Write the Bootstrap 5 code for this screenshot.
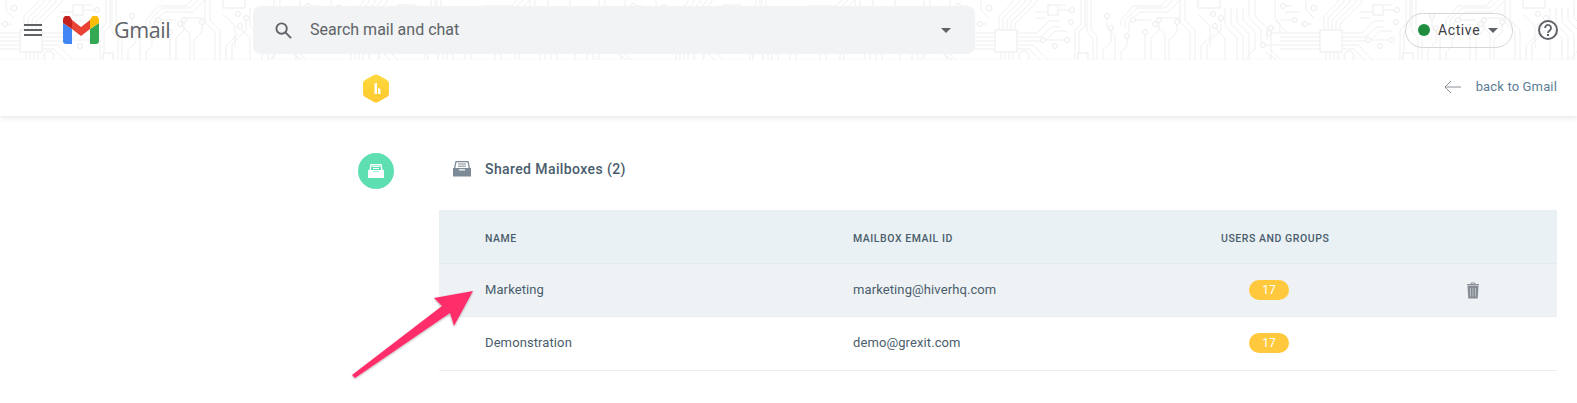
<!doctype html>
<html lang="en">
<head>
<meta charset="utf-8">
<title>Shared Mailboxes</title>
<link href="https://cdn.jsdelivr.net/npm/bootstrap@5.3.0/dist/css/bootstrap.min.css" rel="stylesheet">
<style>
html,body{height:403px;overflow:hidden;background:#fff;font-family:Roboto,"Liberation Sans",sans-serif;color:#4a5d6c}
.gm-head{height:60px;z-index:1}
.gm-bg{inset:0;width:100%;height:100%;z-index:-1}
.gm-menu{margin-left:24px;width:18px;height:12px;flex:none}
.gm-logo{margin-left:21px;width:36px;height:28px;flex:none}
.gm-word{font-family:"Open Sans",Roboto,sans-serif;font-size:21.5px;letter-spacing:-.4px;color:#5f6368;margin-left:15px;width:83px;margin-right:56px;line-height:28px;flex:none}
.gm-search{width:722px;height:48px;background:#f1f3f4;border-radius:8px;color:#5f6368;font-size:16px;padding:0 24px 0 22px;flex:none}
.gm-search-text{margin-left:18px}
.gm-tools{margin-left:auto;padding-right:19px}
.gm-active{width:108px;height:35px;border:1px solid #d5d7d9;border-radius:18px;font-size:14px;font-weight:400;color:#3c4043;letter-spacing:.6px;padding-left:12px}
.gm-dot{width:12px;height:12px;border-radius:50%;background:#1e8e3e;margin-right:8px}
.gm-caret{width:0;height:0;border:5px solid transparent;border-top-color:#5f6368;border-bottom:0;margin-left:8px}
.gm-help{margin-left:25px;width:20px;height:20px}
.hv-bar{height:56px;box-shadow:0 2px 5px rgba(0,0,0,.09);padding-left:363px;padding-right:20px}
.hv-back{font-size:13px;color:#5a7d96;letter-spacing:.15px;margin-top:-2px}
.hv-back svg{margin-right:14px}
.hv-main{padding-left:358px;padding-right:20px;padding-top:37px}
.hv-rail{width:81px;flex:none}
.hv-round{width:36px;height:36px;background:#5ddfb2}
.hv-title{height:36px;padding-left:14px;font-size:14px;font-weight:500;letter-spacing:.4px;margin-top:-2px;margin-bottom:23px}
.hv-title svg{margin-right:14px}
.hv-tbl{table-layout:fixed;width:1118px;font-size:13px;letter-spacing:.1px;color:#4a5d6c;--bs-table-bg:transparent;margin:0}
.hv-tbl th,.hv-tbl td{padding:0;vertical-align:middle;border-bottom:1px solid #e8eef2;color:#4a5d6c}
.hv-tbl th{height:53px;background:#e9f1f4;font-size:10.5px;font-weight:500;letter-spacing:.55px;text-transform:uppercase;padding-top:5px;border-bottom-color:#e2eaee}
.hv-tbl td{height:53.5px}
.hv-tbl tr.hv-hot td{background:#eef2f5}
.hv-tbl td.hv-low{padding-bottom:2px}
.hv-c1{width:414px;padding-left:46px!important}
.hv-c2{width:368px}
.hv-c3{width:160px}
.hv-pill{width:40px;height:20px;border-radius:10px;background:#ffc83d;color:#fff;font-size:12px;margin-left:28px;line-height:20px}
.hv-trash{margin-left:85px}
.hv-arrow{left:345px;top:285px;width:135px;height:100px;z-index:2}
</style>
</head>
<body class="position-relative">
<header class="gm-head position-relative d-flex align-items-center overflow-hidden">
<svg class="gm-bg position-absolute" aria-hidden="true">
<defs><pattern id="circ" width="325" height="60" patternUnits="userSpaceOnUse">
<g fill="none" stroke="#efefef" stroke-width="1">
<path d="M0 33H20M0 37H20M0 41H20M0 45H20M0 49H20M24 30V16L38 2V0M28 30V18L44 2V0M32 30V20L50 2V0M36 30V22L56 2V0M40 30V24L62 2V0M42 33H62L74 21H84M42 37H66L76 27H84M42 41H70L80 31H92M42 45H58L73 60M42 49H54L65 60M26 52V60M30 52V60M34 52V60M38 52V60M6 0V10L14 18M0 24H12M90 40H70M84 10H96M84 5H92M60 12H72M60 18H70"/>
<path d="M100 60V30L106 24V0M104 60V32L110 26V0M118 60V38L112 32V0M122 60V36L116 30V0M128 60V50L136 42V30M140 60V36L132 28V18M146 60V52L152 46V38"/>
<path d="M150 28V20L162 8H190L198 0M154 32V22L165 12H193L205 0M146 26V20L158 6H186L192 0M170 60V34M176 60V38L184 30V22M190 60V34L182 26M194 60V40L202 32V24M205 0V22L215 32V60M210 0V20L220 30V60M182 18H205M160 20H176"/>
<path d="M223 14L235 26V48M226 60V46L238 34M232 60V44L246 30V20M250 60V38L240 28M250 8V26L262 38V60M256 8V24L268 36V60M262 8V22L274 34V60M268 8V20L280 32V50M274 0V18L286 30V46M280 0V16L292 28V40M296 60V30M300 0V18L305 24V32"/>
<path d="M305 33H325M305 37H325M305 41H325M305 45H325M305 49H325M290 45H305M296 33H305M300 20L313 33M306 20H318M310 12H325M310 6H318M290 52L302 60M296 50L306 60M270 60L280 48"/>
</g>
<g fill="#fff" stroke="#ebebeb"><circle cx="14" cy="8" r="3"/><circle cx="5" cy="24" r="2.500"/><circle cx="49" cy="56" r="5"/><circle cx="96" cy="22" r="2.500"/><circle cx="92" cy="40" r="2.500"/><circle cx="68" cy="40" r="2.500"/><circle cx="97" cy="10" r="2.500"/><circle cx="80" cy="46" r="2.500"/><circle cx="136" cy="28" r="2.500"/><circle cx="132" cy="16" r="2.500"/><circle cx="152" cy="36" r="2.500"/><circle cx="184" cy="20" r="2.500"/><circle cx="180" cy="24" r="2.500"/><circle cx="202" cy="22" r="2.500"/><circle cx="158" cy="20" r="2.500"/><circle cx="170" cy="32" r="2.500"/><circle cx="238" cy="14" r="2.500"/><circle cx="246" cy="18" r="2.500"/><circle cx="240" cy="26" r="2.500"/><circle cx="296" cy="28" r="2.500"/><circle cx="288" cy="45" r="2.500"/><circle cx="294" cy="33" r="2.500"/><circle cx="320" cy="20" r="2.500"/><circle cx="308" cy="6" r="2.500"/></g>
<g fill="#fff" stroke="#ececec"><rect x="20" y="30" width="22" height="22"/><rect x="73" y="5" width="10" height="10"/><rect x="223" y="-14" width="22" height="22"/><rect x="103" y="53" width="10" height="14"/></g>
</pattern></defs>
<rect width="100%" height="100%" fill="url(#circ)" />
</svg>
<svg class="gm-menu" viewBox="0 0 18 12" aria-hidden="true"><path d="M0 0h18v2H0zM0 5h18v2H0zM0 10h18v2H0z" fill="#5f6368"/></svg>
<svg class="gm-logo" viewBox="0 0 36 28" aria-hidden="true">
<path d="M0 7v18a3 3 0 0 0 3 3h6V13z" fill="#4285f4"/>
<path d="M27 28h6a3 3 0 0 0 3-3V7l-9 6z" fill="#34a853"/>
<path d="M27 4v9l9-6V4c0-4-4-5.500-7-3.500z" fill="#fbbc04"/>
<path d="M9 13V4l9 7 9-7v9l-9 7z" fill="#ea4335"/>
<path d="M0 4v3l9 6V4L7 .5C4-1.500 0 0 0 4z" fill="#c5221f"/>
</svg>
<span class="gm-word">Gmail</span>
<div class="gm-search d-flex align-items-center">
<svg width="17" height="17" viewBox="0 0 18 18" aria-hidden="true"><circle cx="7" cy="7" r="5.500" fill="none" stroke="#5f6368" stroke-width="2"/><path d="M11 11l6 6" stroke="#5f6368" stroke-width="2"/></svg>
<span class="gm-search-text">Search mail and chat</span>
<span class="gm-caret ms-auto"></span>
</div>
<div class="gm-tools d-flex align-items-center">
<div class="gm-active d-flex align-items-center"><span class="gm-dot"></span>Active<span class="gm-caret"></span></div>
<svg class="gm-help" viewBox="0 0 20 20" aria-hidden="true"><circle cx="10" cy="10" r="9" fill="none" stroke="#5f6368" stroke-width="2"/><path d="M7 8a3 3 0 1 1 4.700 2.400C10.700 11.100 10 11.700 10 13" fill="none" stroke="#5f6368" stroke-width="1.800"/><rect x="9" y="14" width="2" height="2" fill="#5f6368"/></svg>
</div>
</header>
<div class="hv-bar d-flex align-items-center justify-content-between bg-white">
<svg width="26" height="29" viewBox="0 0 26 29" aria-hidden="true"><defs><linearGradient id="hexg" x1="0" y1="0" x2="0" y2="1"><stop offset="0" stop-color="#ffd93f"/><stop offset="1" stop-color="#fdc92f"/></linearGradient></defs><path d="M11 1a4 4 0 0 1 4 0l9 5a4 4 0 0 1 2 3.500v10a4 4 0 0 1-2 3.500l-9 5a4 4 0 0 1-4 0l-9-5a4 4 0 0 1-2-3.500v-10A4 4 0 0 1 2 6z" fill="url(#hexg)"/><path d="M11.500 9.500l2.500-.5v11h-2.500zM15 14l2.500 1v5H15z" fill="#fff"/></svg>
<a class="hv-back d-flex align-items-center text-decoration-none" href="#"><svg width="19" height="14" viewBox="0 0 19 14" aria-hidden="true"><path d="M18 7H2M8 1L2 7l6 6" fill="none" stroke="#8a9299" stroke-width="1"/></svg>back to Gmail</a>
</div>
<main class="hv-main d-flex">
<div class="hv-rail">
<div class="hv-round rounded-circle d-flex align-items-center justify-content-center">
<svg width="16" height="14" viewBox="0 0 16 14" aria-hidden="true"><path d="M3 .7h10l1 6H2z" fill="none" stroke="#fff" stroke-width="1.400"/><path d="M4.500 2.500h7M5 4.500h6" stroke="#fff"/><path d="M0 6h5v2h6V6h5v8H0z" fill="#fff"/></svg>
</div>
</div>
<div>
<div class="hv-title d-flex align-items-center">
<svg width="18" height="16" viewBox="0 0 18 16" aria-hidden="true"><path d="M3 .700h12l1.500 7H1.500z" fill="none" stroke="#7b8a96" stroke-width="1.300"/><path d="M5 3h8M5 5.200h8" stroke="#7b8a96"/><path d="M0 7h6v2.500h6V7h6v8.500H0z" fill="#7b8a96"/></svg>
Shared Mailboxes (2)
</div>
<table class="table hv-tbl">
<thead><tr><th class="hv-c1">Name</th><th class="hv-c2">Mailbox email ID</th><th class="hv-c3">Users and groups</th><th></th></tr></thead>
<tbody>
<tr class="hv-hot"><td class="hv-c1">Marketing</td><td>marketing@hiverhq.com</td><td><div class="hv-pill text-center">17</div></td>
<td><svg class="hv-trash" width="14" height="17" viewBox="0 0 14 17" aria-hidden="true"><path d="M1 2.500h12M5 2.500V1h4v1.500" fill="none" stroke="#8b929a" stroke-width="1"/><path d="M1.500 3.500h11l-.8 13H2.300z" fill="#858c94"/><path d="M4.500 6v8.500M7 6v8.500M9.500 6v8.500" stroke="#b9bec3" stroke-width="1"/></svg></td></tr>
<tr><td class="hv-c1 hv-low">Demonstration</td><td class="hv-low">demo@grexit.com</td><td><div class="hv-pill text-center">17</div></td><td></td></tr>
</tbody>
</table>
</div>
</main>
<svg class="hv-arrow position-absolute" viewBox="345 285 135 100" aria-hidden="true"><defs><filter id="ash" x="-10%" y="-10%" width="120%" height="120%"><feDropShadow dx="0" dy="1" stdDeviation="1" flood-color="#000" flood-opacity=".3"/></filter></defs><path d="M473 291L454 326 450 313 355 378 352 375 442 306 434 298z" fill="#ff2f6b" filter="url(#ash)"/></svg>
<script src="https://cdn.jsdelivr.net/npm/bootstrap@5.3.0/dist/js/bootstrap.bundle.min.js"></script>
</body>
</html>
